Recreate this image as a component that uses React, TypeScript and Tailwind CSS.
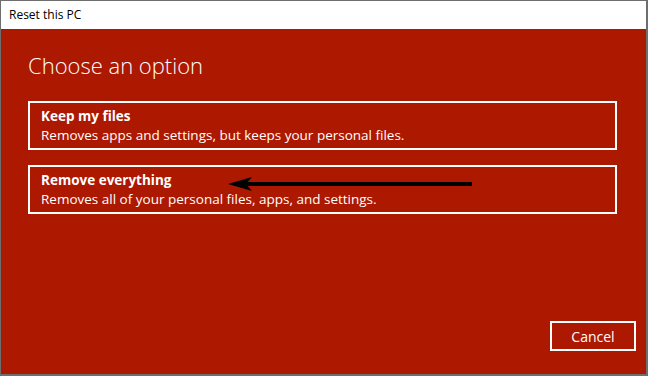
import React from "react";

export default function App() {
  const font = { fontFamily: '"Open Sans", "Noto Sans", sans-serif' };
  return (
    <div className="w-[648px] h-[376px] bg-[#6e6e6e] pt-px pl-px pr-[2px] pb-[2px]" style={font}>
      <div className="flex flex-col h-full">
        <div className="h-[28px] bg-white flex items-center pl-[8px] text-[12px] text-black">Reset this PC</div>
        <div className="flex-1 bg-[#ad1800] flex flex-col pl-[27px] pr-[29px] text-white">
          <div className="mt-[19px] h-[34px] text-[22px] font-light leading-[34px]">Choose an option</div>
          <div className="mt-[19px] h-[49px] border-2 border-white px-[11px] pt-[4px] text-[13.5px] leading-[19px]">
            <div className="font-bold">Keep my files</div>
            <div>Removes apps and settings, but keeps your personal files.</div>
          </div>
          <div className="relative mt-[15px] h-[49px] border-2 border-white px-[11px] pt-[4px] text-[13.5px] leading-[19px]">
            <div className="font-bold">Remove everything</div>
            <div>Removes all of your personal files, apps, and settings.</div>
            <svg className="absolute left-[198px] top-[9px]" width="246" height="16" viewBox="0 0 246 16">
              <rect x="14" y="6" width="230" height="4" fill="#000" />
              <path d="M0 8 L24 1 L18 8 L24 15 Z" fill="#000" />
            </svg>
          </div>
          <div className="flex-1" />
          <div className="flex justify-end mr-[-19px] mb-[23px]">
            <div className="w-[86px] h-[30px] border-2 border-white flex items-center justify-center text-[14px]">Cancel</div>
          </div>
        </div>
      </div>
    </div>
  );
}
